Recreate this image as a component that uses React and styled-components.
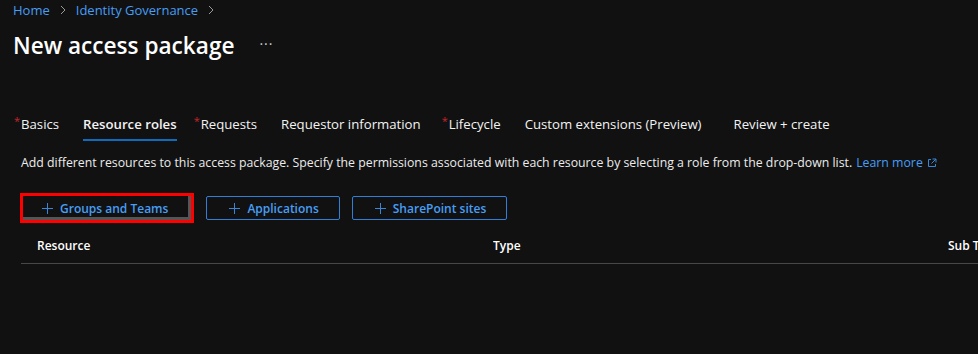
import React from "react";
import styled, { createGlobalStyle } from "styled-components";

const GlobalStyle = createGlobalStyle`
  body {
    margin: 0;
    background: #111111;
    font-family: "Segoe UI", "Open Sans", "Noto Sans", sans-serif;
    color: #f0f0f0;
  }
`;

const Page = styled.div`
  width: 978px;
  height: 354px;
  overflow: hidden;
  background: #111111;
  padding-left: 13px;
  box-sizing: border-box;
`;

const Breadcrumb = styled.div`
  display: flex;
  align-items: center;
  gap: 9px;
  height: 20px;
  font-size: 13px;
`;

const Crumb = styled.a`
  color: #479ef5;
  text-decoration: none;
`;

const Chevron = styled.svg`
  width: 8px;
  height: 10px;
  stroke: #9a9a9a;
  fill: none;
`;

const TitleRow = styled.div`
  display: flex;
  align-items: center;
  gap: 25px;
  margin-top: 9px;
  height: 32px;
`;

const Title = styled.h1`
  margin: 0;
  font-size: 22.6px;
  font-weight: 600;
  color: #ffffff;
`;

const More = styled.span`
  color: #d0d0d0;
  font-size: 14px;
  letter-spacing: 1px;
  margin-top: -4px;
`;

const Tabs = styled.nav`
  display: flex;
  align-items: flex-start;
  margin-top: 53px;
  margin-left: -4px;
  height: 28px;
`;

const Tab = styled.div`
  position: relative;
  padding: 0 12px;
  margin-left: ${(p) => p.extra || 0}px;
  font-size: 13.2px;
  color: #f3f3f3;
  font-weight: ${(p) => (p.active ? 600 : 400)};
`;

const Star = styled.span`
  position: absolute;
  left: 5px;
  top: 1px;
  color: #c4262c;
  font-size: 11px;
  line-height: 12px;
`;

const TabLabel = styled.span`
  display: inline-block;
  padding-bottom: 5px;
  border-bottom: 2px solid ${(p) => (p.active ? "#0f6cbd" : "transparent")};
  line-height: 20px;
`;

const Description = styled.p`
  margin: 12px 0 0 8px;
  font-size: 12.3px;
  color: #ececec;
  white-space: nowrap;
  display: flex;
  align-items: center;
  gap: 4px;
`;

const LinkText = styled.a`
  color: #479ef5;
  text-decoration: none;
  display: inline-flex;
  align-items: center;
  gap: 4px;
`;

const ButtonRow = styled.div`
  display: flex;
  align-items: center;
  gap: 12px;
  margin-top: 22px;
  margin-left: 7px;
`;

const Highlight = styled.div`
  border: 3px solid #ff0000;
  box-shadow: inset -3px -3px 0 #555555;
  padding: 0 2px;
  display: flex;
`;

const ActionButton = styled.button`
  display: flex;
  align-items: center;
  gap: 7px;
  height: 24px;
  padding: 0 20px 0 ${(p) => (p.bare ? "16px" : "22px")};
  background: transparent;
  border: 1px solid ${(p) => (p.bare ? "transparent" : "#2f7ed8")};
  border-radius: 2px;
  color: #479ef5;
  font-family: inherit;
  font-size: 12px;
  font-weight: 600;
  box-sizing: border-box;
`;

const PlusIcon = styled.svg`
  width: 11px;
  height: 11px;
  stroke: #3a86d6;
  stroke-width: 1;
`;

const TableHeader = styled.div`
  display: grid;
  grid-template-columns: 456px 455px 1fr;
  margin-left: 8px;
  margin-top: 4px;
  height: 36px;
  align-items: center;
  padding-left: 16px;
  border-bottom: 1px solid #474747;
  white-space: nowrap;
`;

const HeaderCell = styled.div`
  font-size: 12px;
  font-weight: 600;
  color: #ffffff;
  overflow: hidden;
`;

const ChevronIcon = () => (
  <Chevron viewBox="0 0 8 10">
    <path d="M2 1 L6 5 L2 9" strokeWidth="1" />
  </Chevron>
);

const Plus = () => (
  <PlusIcon viewBox="0 0 11 11">
    <path d="M5.5 0 V11 M0 5.5 H11" />
  </PlusIcon>
);

const tabs = [
  { label: "Basics", required: true },
  { label: "Resource roles", active: true },
  { label: "Requests", required: true },
  { label: "Requestor information" },
  { label: "Lifecycle", required: true, extra: 4 },
  { label: "Custom extensions (Preview)" },
  { label: "Review + create", extra: 8 },
];

export default function App() {
  return (
    <>
      <GlobalStyle />
      <Page>
        <Breadcrumb>
          <Crumb>Home</Crumb>
          <ChevronIcon />
          <Crumb>Identity Governance</Crumb>
          <ChevronIcon />
        </Breadcrumb>
        <TitleRow>
          <Title>New access package</Title>
          <More>···</More>
        </TitleRow>
        <Tabs>
          {tabs.map((t) => (
            <Tab key={t.label} active={t.active} extra={t.extra}>
              {t.required && <Star>*</Star>}
              <TabLabel active={t.active}>{t.label}</TabLabel>
            </Tab>
          ))}
        </Tabs>
        <Description>
          Add different resources to this access package. Specify the permissions associated with each
          resource by selecting a role from the drop-down list.
          <LinkText>
            Learn more
            <svg width="10" height="10" viewBox="0 0 10 10" fill="none" stroke="#3a86d6" strokeWidth="1">
              <path d="M4 1.5 H1.5 V8.5 H8.5 V6 M5.5 1 H9 V4.5 M9 1 L4.5 5.5" />
            </svg>
          </LinkText>
        </Description>
        <ButtonRow>
          <Highlight>
            <ActionButton bare>
              <Plus />
              Groups and Teams
            </ActionButton>
          </Highlight>
          <ActionButton>
            <Plus />
            Applications
          </ActionButton>
          <ActionButton>
            <Plus />
            SharePoint sites
          </ActionButton>
        </ButtonRow>
        <TableHeader>
          <HeaderCell>Resource</HeaderCell>
          <HeaderCell>Type</HeaderCell>
          <HeaderCell>Sub T</HeaderCell>
        </TableHeader>
      </Page>
    </>
  );
}
